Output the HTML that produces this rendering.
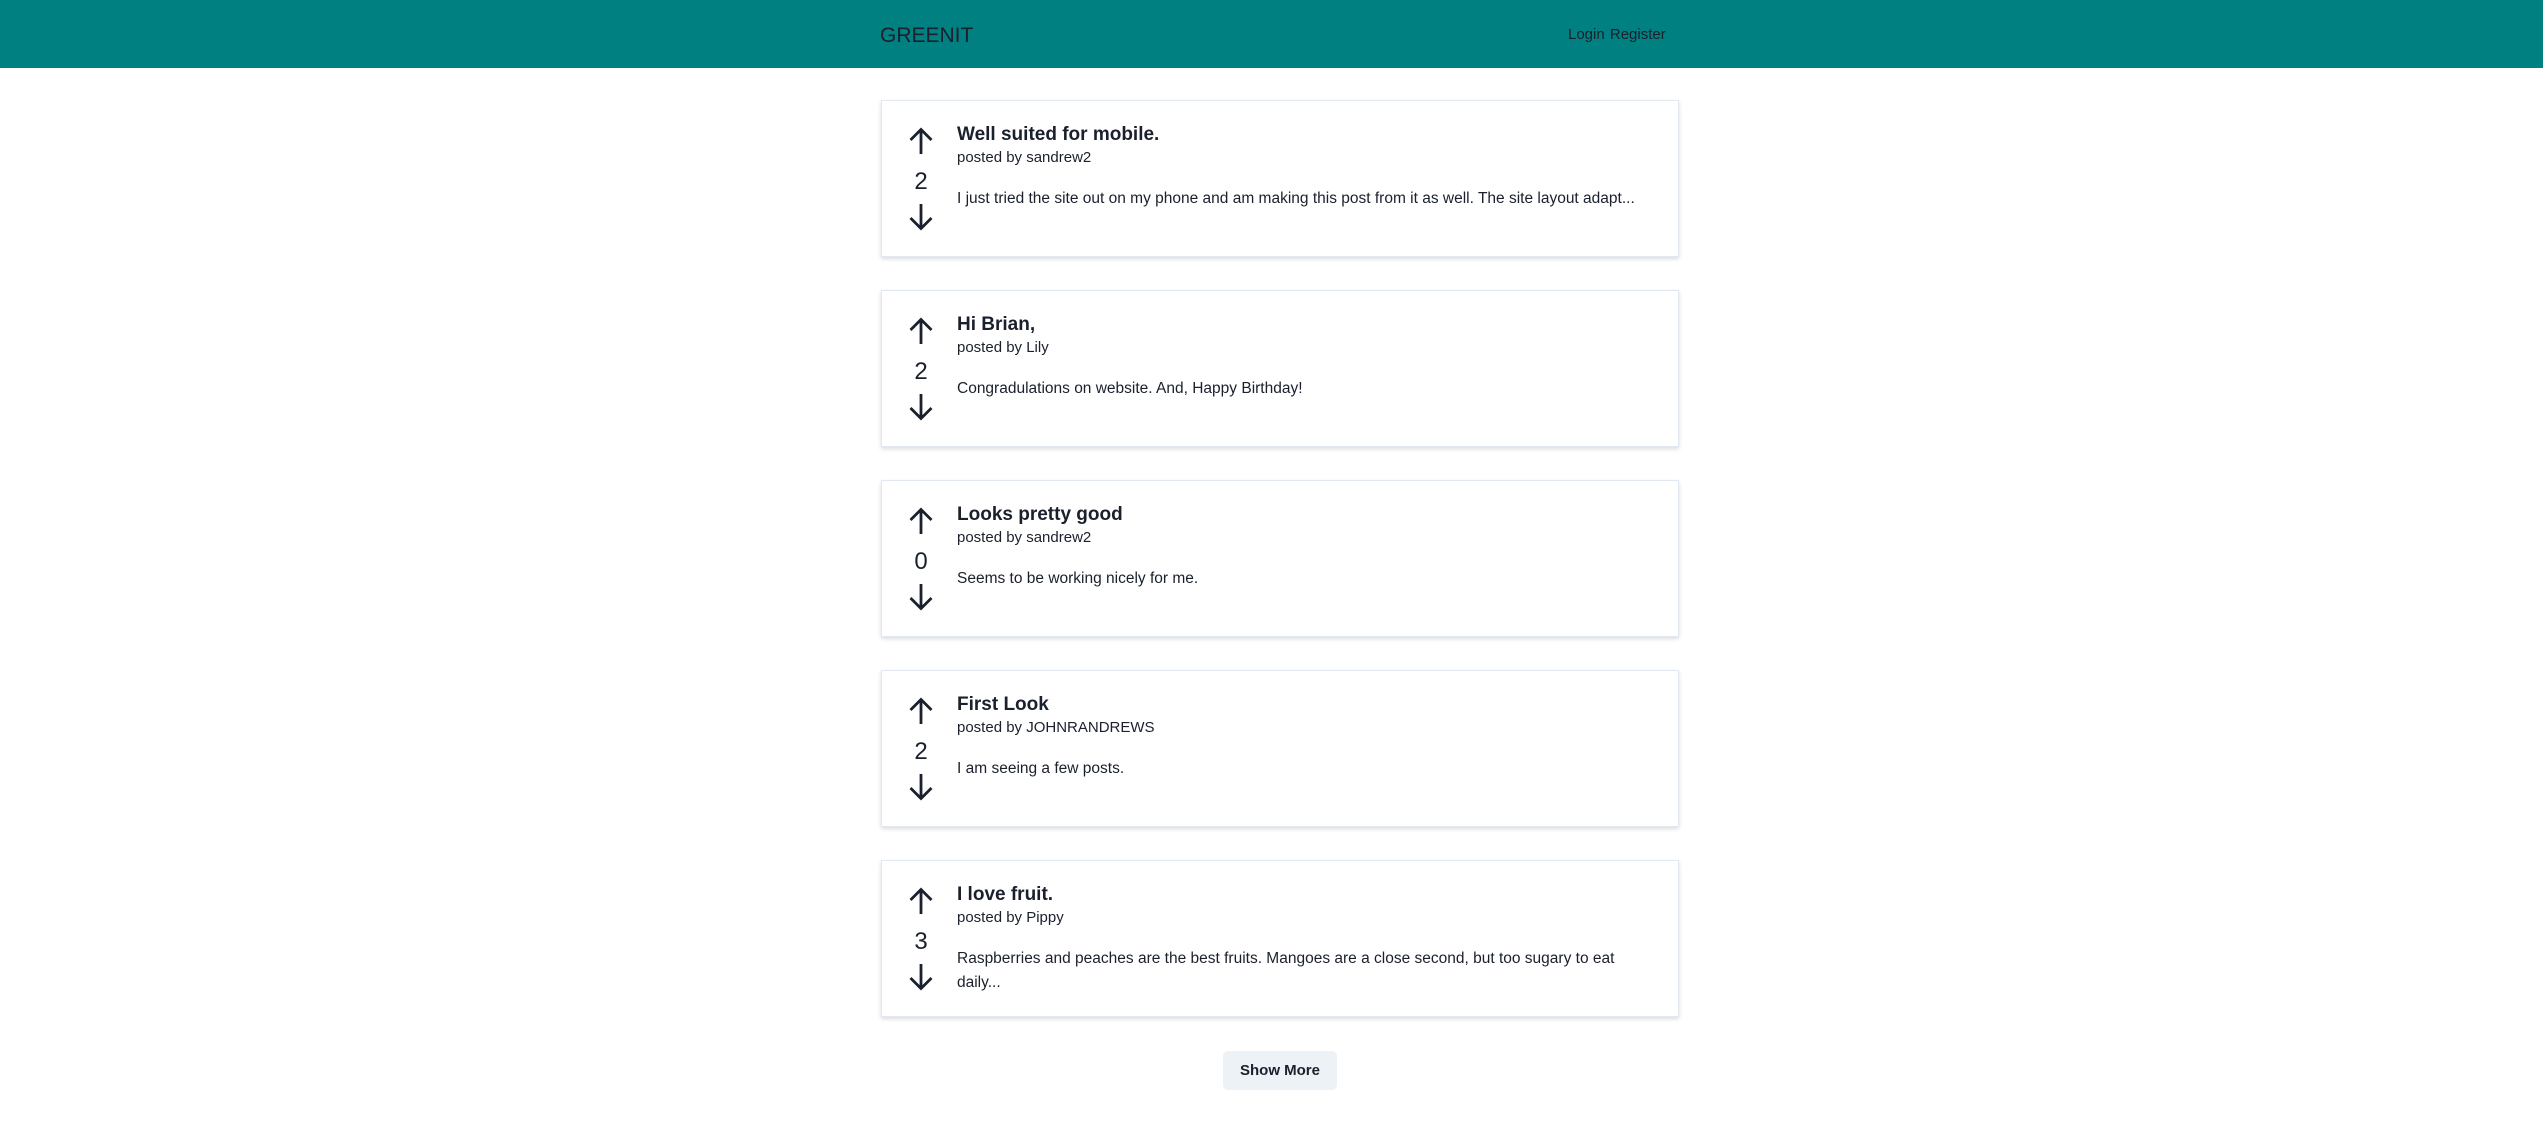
<!DOCTYPE html>
<html><head><meta charset="utf-8"><style>
*{margin:0;padding:0;box-sizing:border-box}
body{width:2543px;height:1122px;background:#fff;font-family:"Liberation Sans",sans-serif;color:#1a202c;position:relative;overflow:hidden}
.hdr{position:absolute;left:0;top:0;width:2543px;height:68px;background:#008080}
.logo{position:absolute;left:880px;top:22px;font-size:21px;color:#1a202c;line-height:28px}
.nav{position:absolute;left:1568px;top:25px;font-size:15px;color:#1a202c;line-height:20px;word-spacing:1px}
.card{position:absolute;left:881px;width:798px;height:157px;border:1px solid #e2e8f0;box-shadow:0 2px 4px rgba(0,0,0,.14);background:#fff}
.up,.dn{position:absolute;left:26px;width:26px;height:28px}
.up{top:26px}.dn{top:102px}
.num{position:absolute;left:19px;width:40px;text-align:center;top:66px;font-size:24px;line-height:30px;color:#1a202c}
.t{position:absolute;left:75px;top:22px;font-size:19px;font-weight:bold;line-height:24px;color:#1a202c}
.p{position:absolute;left:75px;top:46px;font-size:15px;line-height:22px;color:#1a202c}
.b{position:absolute;left:75px;top:86px;width:705px;font-size:15.5px;line-height:24px;color:#1a202c}
.nw{white-space:nowrap;overflow:hidden;text-overflow:clip}
.btn{position:absolute;left:1223px;top:1051px;width:114px;height:39px;background:#edf2f7;border-radius:5px;font-size:15px;font-weight:600;line-height:39px;text-align:center;color:#1a202c}
</style></head><body>
<div class="hdr"><div class="logo">GREENIT</div><div class="nav">Login Register</div></div>

<div class="card" style="top:100px">
<svg class="up" viewBox="0 0 26 28"><path d="M13 27V3M2.5 13L13 2.5L23.5 13" fill="none" stroke="#1a202c" stroke-width="2.8"/></svg>
<div class="num">2</div>
<svg class="dn" viewBox="0 0 26 28"><path d="M13 1V25M2.5 15L13 25.5L23.5 15" fill="none" stroke="#1a202c" stroke-width="2.8"/></svg>
<div class="t">Well suited for mobile.</div><div class="p">posted by sandrew2</div>
<div class="b nw">I just tried the site out on my phone and am making this post from it as well. The site layout adapt...</div></div>

<div class="card" style="top:290px">
<svg class="up" viewBox="0 0 26 28"><path d="M13 27V3M2.5 13L13 2.5L23.5 13" fill="none" stroke="#1a202c" stroke-width="2.8"/></svg>
<div class="num">2</div>
<svg class="dn" viewBox="0 0 26 28"><path d="M13 1V25M2.5 15L13 25.5L23.5 15" fill="none" stroke="#1a202c" stroke-width="2.8"/></svg>
<div class="t">Hi Brian,</div><div class="p">posted by Lily</div>
<div class="b">Congradulations on website. And, Happy Birthday!</div></div>

<div class="card" style="top:480px">
<svg class="up" viewBox="0 0 26 28"><path d="M13 27V3M2.5 13L13 2.5L23.5 13" fill="none" stroke="#1a202c" stroke-width="2.8"/></svg>
<div class="num">0</div>
<svg class="dn" viewBox="0 0 26 28"><path d="M13 1V25M2.5 15L13 25.5L23.5 15" fill="none" stroke="#1a202c" stroke-width="2.8"/></svg>
<div class="t">Looks pretty good</div><div class="p">posted by sandrew2</div>
<div class="b">Seems to be working nicely for me.</div></div>

<div class="card" style="top:670px">
<svg class="up" viewBox="0 0 26 28"><path d="M13 27V3M2.5 13L13 2.5L23.5 13" fill="none" stroke="#1a202c" stroke-width="2.8"/></svg>
<div class="num">2</div>
<svg class="dn" viewBox="0 0 26 28"><path d="M13 1V25M2.5 15L13 25.5L23.5 15" fill="none" stroke="#1a202c" stroke-width="2.8"/></svg>
<div class="t">First Look</div><div class="p">posted by JOHNRANDREWS</div>
<div class="b">I am seeing a few posts.</div></div>

<div class="card" style="top:860px">
<svg class="up" viewBox="0 0 26 28"><path d="M13 27V3M2.5 13L13 2.5L23.5 13" fill="none" stroke="#1a202c" stroke-width="2.8"/></svg>
<div class="num">3</div>
<svg class="dn" viewBox="0 0 26 28"><path d="M13 1V25M2.5 15L13 25.5L23.5 15" fill="none" stroke="#1a202c" stroke-width="2.8"/></svg>
<div class="t">I love fruit.</div><div class="p">posted by Pippy</div>
<div class="b" style="width:690px">Raspberries and peaches are the best fruits. Mangoes are a close second, but too sugary to eat daily...</div></div>

<div class="btn">Show More</div>
</body></html>
